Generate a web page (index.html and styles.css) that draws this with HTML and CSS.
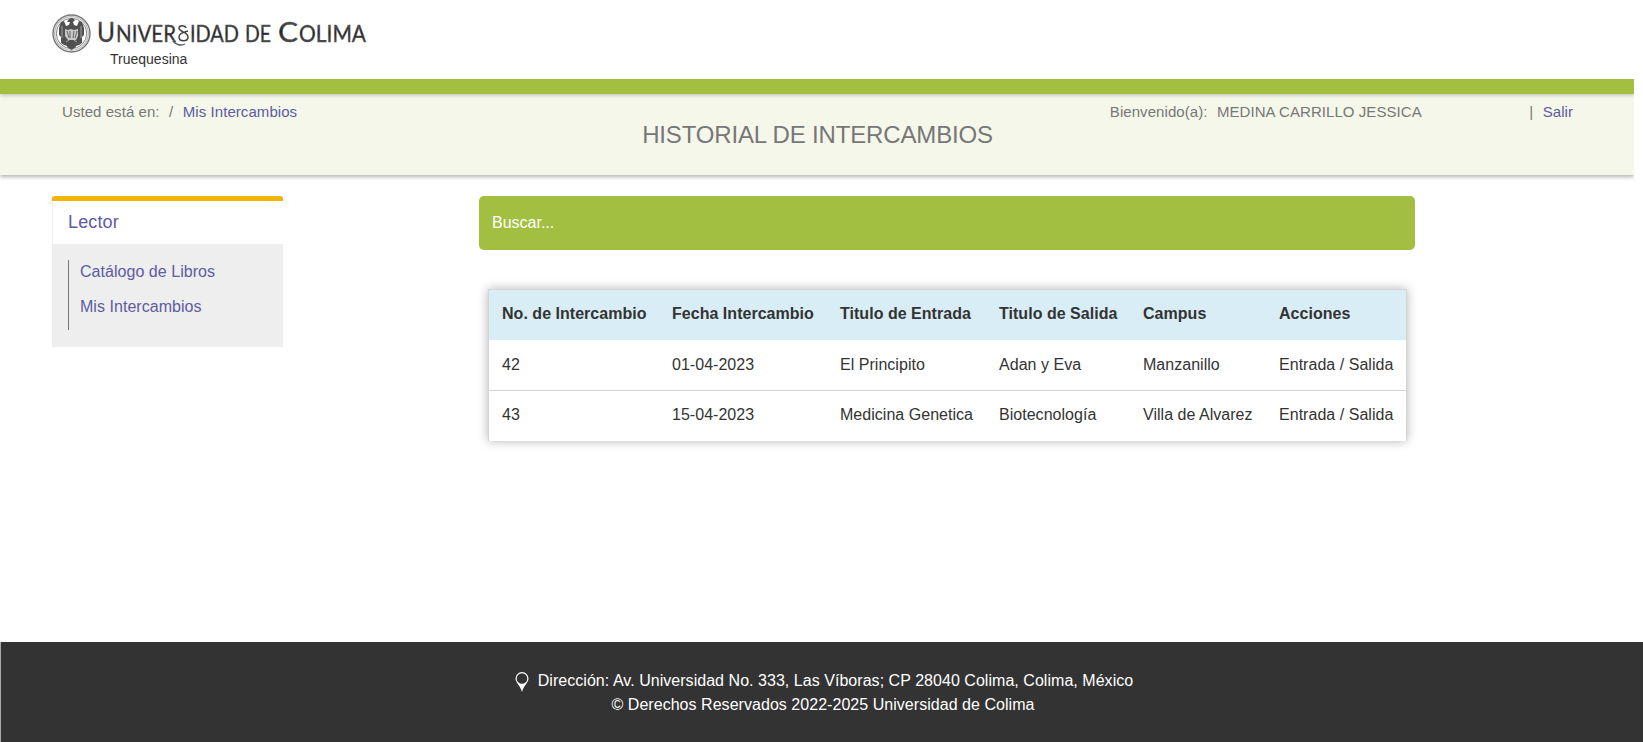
FILE: index.html
```html
<!DOCTYPE html>
<html lang="es">
<head>
<meta charset="utf-8">
<title>Historial de Intercambios</title>
<link rel="stylesheet" href="styles.css">
</head>
<body>
<div class="page">
  <header class="header">
    <svg class="logo" width="320" height="44" viewBox="0 0 320 44">
      <defs>
        <linearGradient id="ink" x1="0" y1="0" x2="0" y2="1"><stop offset="0" stop-color="#777"/><stop offset=".5" stop-color="#222"/><stop offset="1" stop-color="#666"/></linearGradient>
      </defs>
      <g fill="none" stroke="#777">
        <circle cx="19.500" cy="19.500" r="18.500" stroke-width="1.400"/>
        <circle cx="19.500" cy="19.500" r="16.800" stroke="#bbb" stroke-width="1.300"/>
        <circle cx="19.500" cy="19.500" r="15.200" stroke-width=".9"/>
      </g>
      <path fill="#505050" d="M17 5l3-1 3 2-2 2 1 3 3 1 2-5 3 1 2 6v7l-2 2v6l-3 2-3 1-1 1h-7l-1-1-3-1-3-2v-6l-2-2v-7l2-6 3-1 2 5 3-1 1-3-3 0z"/>
      <path fill="#505050" d="M16 31l3.500-2 3.500 2 1 2-4.500 3-4.500-3z"/>
      <path fill="#c8c8c8" d="M13 15l3 1 3-1 3 1 4-1v7l-2 4h-8l-3-4z"/>
      <path fill="none" stroke="#666" d="M15 17l2 7M18 17v7M22 17l-1 7M25 17l-2 7"/>
      <path fill="none" stroke="#bbb" stroke-width=".8" d="M10 12v12M29 12v12M14 28l3-2M25 28l-3-2"/>
      <g fill="url(#ink)" stroke="#444" stroke-width=".35" class="wordmark">
        <text x="45" y="28" font-size="27" textLength="18" lengthAdjust="spacingAndGlyphs">U</text>
        <text x="64" y="28" font-size="23" textLength="60" lengthAdjust="spacingAndGlyphs">NIVER</text>
        <text x="138" y="28" font-size="23" textLength="49" lengthAdjust="spacingAndGlyphs">IDAD</text>
        <text x="193" y="28" font-size="23" textLength="26" lengthAdjust="spacingAndGlyphs">DE</text>
        <text x="226" y="28" font-size="27" textLength="20" lengthAdjust="spacingAndGlyphs">C</text>
        <text x="247" y="28" font-size="23" textLength="67" lengthAdjust="spacingAndGlyphs">OLIMA</text>
      </g>
      <path d="M134 14c-1-3-7-3-7 0 0 4 9 4 9 9 0 5-9 5-9 0 0-3 4-5 9-6" fill="none" stroke="#444" stroke-width="1.500"/>
      <path d="M121 27c3 4 8 5 12 3" fill="none" stroke="#555" stroke-width="1.300"/>
    </svg>
    <div class="system">Truequesina</div>
  </header>
  <div class="top">
    <div class="bar"></div>
    <section class="band">
      <nav class="crumbs"><span>Usted está en:</span><span>/</span><a>Mis Intercambios</a></nav>
      <h1 class="title">HISTORIAL DE INTERCAMBIOS</h1>
      <div class="user"><span>Bienvenido(a):</span><span class="name">MEDINA CARRILLO JESSICA</span><span class="sep">|</span><a>Salir</a></div>
    </section>
  </div>
  <main class="main">
    <aside class="menu">
      <div class="menu-title">Lector</div>
      <div class="menu-body"><ul><li>Catálogo de Libros</li><li>Mis Intercambios</li></ul></div>
    </aside>
    <div class="content">
      <div class="search">Buscar...</div>
      <table class="table">
        <colgroup><col class="c1"><col class="c2"><col class="c3"><col class="c4"><col class="c5"><col></colgroup>
        <thead><tr><th>No. de Intercambio</th><th>Fecha Intercambio</th><th>Titulo de Entrada</th><th>Titulo de Salida</th><th>Campus</th><th>Acciones</th></tr></thead>
        <tbody>
          <tr><td>42</td><td>01-04-2023</td><td>El Principito</td><td>Adan y Eva</td><td>Manzanillo</td><td>Entrada / Salida</td></tr>
          <tr><td>43</td><td>15-04-2023</td><td>Medicina Genetica</td><td>Biotecnología</td><td>Villa de Alvarez</td><td>Entrada / Salida</td></tr>
        </tbody>
      </table>
    </div>
  </main>
  <footer class="footer">
    <div class="address"><svg width="14" height="20" viewBox="0 0 14 20"><path fill="#fff" fill-rule="evenodd" d="M7 0a6.500 6.500 0 0 1 6.500 6.500C13.500 10.500 9 13 7 20 5 13 .5 10.500 .5 6.500A6.500 6.500 0 0 1 7 0zM7 1.200a5.300 5.300 0 1 0 0 10.600A5.300 5.300 0 0 0 7 1.200z"/></svg><span>Dirección: Av. Universidad No. 333, Las Víboras; CP 28040 Colima, Colima, México</span></div>
    <div class="rights">© Derechos Reservados 2022-2025 Universidad de Colima</div>
  </footer>
</div>
</body>
</html>
```
FILE: styles.css
```css
* { box-sizing: border-box; }
body { margin: 0; background: #fff; color: #333; font: 16px/24px "Liberation Sans", Arial, sans-serif; }
.page { height: 742px; display: flex; flex-direction: column; overflow: hidden; }
.header { flex: none; height: 79px; padding: 14px 0 0 52px; }
.logo { display: block; height: 44px; margin-bottom: -8px; }
.wordmark { font-family: Lato, sans-serif; }
.system { padding-left: 58px; font-size: 14px; line-height: 18px; }
.top { flex: none; width: 1634px; height: 102px; overflow: hidden; }
.bar { position: relative; height: 15px; background: #a2bf41; box-shadow: 0 1px 4px rgba(0, 0, 0, .25); }
.band { height: 81px; display: grid; grid-template-columns: 1fr auto 1fr; padding: 0 61px 0 62px; background: #f5f7ea; color: #777; font-size: 15px; letter-spacing: .06px; box-shadow: 0 2px 4px rgba(0, 0, 0, .3); }
.crumbs, .user { display: flex; gap: 9.5px; padding-top: 6px; line-height: 24px; white-space: nowrap; }
.user { justify-content: flex-end; }
.sep { margin-left: 98px; }
.band a { color: #5e5ba3; }
.title { margin: 27px 0 0; font-size: 24px; line-height: 28px; font-weight: 400; letter-spacing: -.16px; }
.main { flex: 1; display: flex; align-items: flex-start; padding: 15px 0 0 52px; }
.menu { width: 231px; color: #5e5ba3; border-top: 5px solid #f0b505; border-radius: 3px; }
.menu-title { height: 43px; padding: 9px 0 0 15px; font-size: 18px; letter-spacing: .15px; border-left: 1px solid #eee; }
.menu-body { height: 103px; padding: 16px; background: #eee; }
.menu ul { height: 70px; margin: 0; padding: 0 0 0 11px; list-style: none; border-left: 1px solid #777; letter-spacing: .04px; }
.menu li { height: 35px; }
.content { width: 936px; margin-left: 196px; }
.search { height: 54px; padding: 15px 13px; border-radius: 5px; background: #a2bf41; color: #fff; }
.table { width: 919px; margin: 39px 0 0 9px; border-collapse: separate; border-spacing: 0; table-layout: fixed; border: 1px solid #d5d5d5; border-bottom: 0; box-shadow: 0 0 10px rgba(0, 0, 0, .3); background: #fff; white-space: nowrap; letter-spacing: .03px; }
.c1 { width: 170px; }
.c2 { width: 168px; }
.c3 { width: 159px; }
.c4 { width: 144px; }
.c5 { width: 136px; }
.table th, .table td { height: 50px; padding: 0 0 2px 13px; text-align: left; }
.table th { background: #d9edf6; }
.table tbody tr:first-child td { height: 51px; padding-bottom: 0; border-bottom: 1px solid #d5d5d5; }
.footer { flex: none; height: 100px; box-shadow: -1px 0 #aaa; margin-left: 1px; padding: 27px 0 0 4px; background: #333; color: #fff; text-align: center; letter-spacing: .04px; }
.address { display: flex; justify-content: center; gap: 9px; }
.address svg { margin-top: 3px; }
.rights { padding-right: 2px; }
```
